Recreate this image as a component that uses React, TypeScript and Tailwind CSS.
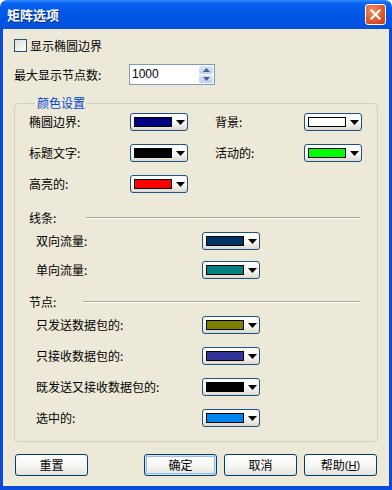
import React from 'react';

const cjk = "font-['Noto_Sans_CJK_SC',_'Noto_Sans',sans-serif]";

const ColorPick = ({ swatch }: { swatch: string }) => (
  <div className="w-[58px] h-[18px] shrink-0 rounded-[3px] border border-[#1C5180] bg-[linear-gradient(to_bottom,#FFFFFF,#F7F7F4_55%,#DCD8CE)] flex items-center pl-[3px] gap-[4px]">
    <div className={`w-[38px] h-[10px] border border-black ${swatch}`} />
    <svg width="9" height="5" viewBox="0 0 9 5">
      <path d="M0 0H9L4.5 5Z" fill="#000" />
    </svg>
  </div>
);

const XpButton = ({ children, isDefault }: { children: React.ReactNode; isDefault?: boolean }) => (
  <button
    className={`w-[73px] h-[22px] rounded-[3px] border border-[#003C74] bg-[linear-gradient(to_bottom,#FFFFFF,#F4F4F0_60%,#E3E2DA)] flex items-center justify-center text-[12px] text-black ${cjk} ${
      isDefault ? 'shadow-[inset_0_0_0_1px_#CEE7FF,inset_0_0_0_2px_#98B8EA]' : ''
    }`}
  >
    {children}
  </button>
);

const Separator = ({ label, width }: { label: string; width: string }) => (
  <div className="flex items-center h-[14px] pr-[17px]">
    <span className={`${width} shrink-0`}>{label}</span>
    <div className="flex-1 h-[2px] border-t border-[#ACA899] border-b border-b-white" />
  </div>
);

const App: React.FC = () => {
  return (
    <div className={`w-[392px] h-[490px] flex flex-col bg-white text-[12px] text-black ${cjk}`}>
      {/* Title bar */}
      <div className="h-[29px] shrink-0 rounded-t-[7px] bg-[linear-gradient(to_bottom,#2F8CFF_0%,#0A62F0_12%,#0157E6_45%,#0054E3_75%,#0650D8_100%)] flex items-center pl-[7px] pr-[6px]">
        <span className="flex-1 text-white font-bold text-[13px] [text-shadow:1px_1px_#0B2A7A]">矩阵选项</span>
        <div className="w-[21px] h-[21px] rounded-[3px] border border-white bg-[radial-gradient(circle_at_35%_30%,#F0906A,#E15A2C_55%,#C43A16)] flex items-center justify-center">
          <svg width="11" height="11" viewBox="0 0 11 11">
            <path d="M1.5 1.5L9.5 9.5M9.5 1.5L1.5 9.5" stroke="#fff" strokeWidth="2.2" strokeLinecap="square" />
          </svg>
        </div>
      </div>

      {/* Body */}
      <div className="flex-1 flex flex-col bg-[#ECE9D8] border-x-[3px] border-b-[4px] border-[#0A4BDB] px-[11px] pt-[10px]">
        <label className="flex items-center gap-[3px] h-[13px]">
          <span className="w-[13px] h-[13px] border border-[#1C5180] bg-[linear-gradient(135deg,#DCDCD7,#FFFFFF)]" />
          <span>显示椭圆边界</span>
        </label>

        <div className="flex items-center mt-[12px] h-[21px]">
          <span className="w-[115px] shrink-0">最大显示节点数:</span>
          <div className="w-[86px] h-[21px] border border-[#7F9DB9] bg-white flex">
            <span className="flex-1 pl-[2px] font-['Liberation_Sans',sans-serif] text-[12px] leading-[19px]">1000</span>
            <div className="w-[16px] flex flex-col gap-px p-px">
              <div className="flex-1 rounded-[2px] bg-[linear-gradient(to_bottom,#DCE7FD,#B9CDF7)] flex items-center justify-center">
                <svg width="7" height="4" viewBox="0 0 7 4"><path d="M0 4L3.5 0L7 4Z" fill="#4D6185" /></svg>
              </div>
              <div className="flex-1 rounded-[2px] bg-[linear-gradient(to_bottom,#DCE7FD,#B9CDF7)] flex items-center justify-center">
                <svg width="7" height="4" viewBox="0 0 7 4"><path d="M0 0L3.5 4L7 0Z" fill="#4D6185" /></svg>
              </div>
            </div>
          </div>
        </div>

        {/* Colour settings group */}
        <fieldset className="mt-[11px] border border-[#D0D0BF] rounded-[4px] pl-[14px] pb-[14px]">
          <legend className="ml-[6px] px-[2px] text-[#0046D5] leading-[14px]">颜色设置</legend>

          <div className="flex flex-col gap-[13px] pt-[3px]">
            <div className="flex items-center h-[18px]">
              <span className="w-[101px] shrink-0">椭圆边界:</span>
              <ColorPick swatch="bg-[#000080]" />
              <span className="w-[89px] ml-[27px] shrink-0">背景:</span>
              <ColorPick swatch="bg-white" />
            </div>
            <div className="flex items-center h-[18px]">
              <span className="w-[101px] shrink-0">标题文字:</span>
              <ColorPick swatch="bg-black" />
              <span className="w-[89px] ml-[27px] shrink-0">活动的:</span>
              <ColorPick swatch="bg-[#00FF00]" />
            </div>
            <div className="flex items-center h-[18px]">
              <span className="w-[101px] shrink-0">高亮的:</span>
              <ColorPick swatch="bg-[#FF0000]" />
            </div>
          </div>

          <div className="mt-[18px]">
            <Separator label="线条:" width="w-[57px]" />
          </div>
          <div className="flex flex-col gap-[11px] mt-[7px] pl-[7px]">
            <div className="flex items-center h-[18px]">
              <span className="w-[166px] shrink-0">双向流量:</span>
              <ColorPick swatch="bg-[#003366]" />
            </div>
            <div className="flex items-center h-[18px]">
              <span className="w-[166px] shrink-0">单向流量:</span>
              <ColorPick swatch="bg-[#008080]" />
            </div>
          </div>

          <div className="mt-[16px]">
            <Separator label="节点:" width="w-[54px]" />
          </div>
          <div className="flex flex-col gap-[13px] mt-[7px] pl-[7px]">
            <div className="flex items-center h-[18px]">
              <span className="w-[166px] shrink-0">只发送数据包的:</span>
              <ColorPick swatch="bg-[#808000]" />
            </div>
            <div className="flex items-center h-[18px]">
              <span className="w-[166px] shrink-0">只接收数据包的:</span>
              <ColorPick swatch="bg-[#333399]" />
            </div>
            <div className="flex items-center h-[18px]">
              <span className="w-[166px] shrink-0">既发送又接收数据包的:</span>
              <ColorPick swatch="bg-black" />
            </div>
            <div className="flex items-center h-[18px]">
              <span className="w-[166px] shrink-0">选中的:</span>
              <ColorPick swatch="bg-[#0084F0]" />
            </div>
          </div>
        </fieldset>

        {/* Buttons */}
        <div className="flex items-center mt-[12px] pl-px">
          <XpButton>重置</XpButton>
          <div className="flex-1" />
          <div className="flex gap-[7px] mr-px">
            <XpButton isDefault>确定</XpButton>
            <XpButton>取消</XpButton>
            <XpButton>
              帮助<span className="font-['Liberation_Sans',sans-serif] text-[11px]">(<span className="underline">H</span>)</span>
            </XpButton>
          </div>
        </div>
      </div>
    </div>
  );
};

export default App;
